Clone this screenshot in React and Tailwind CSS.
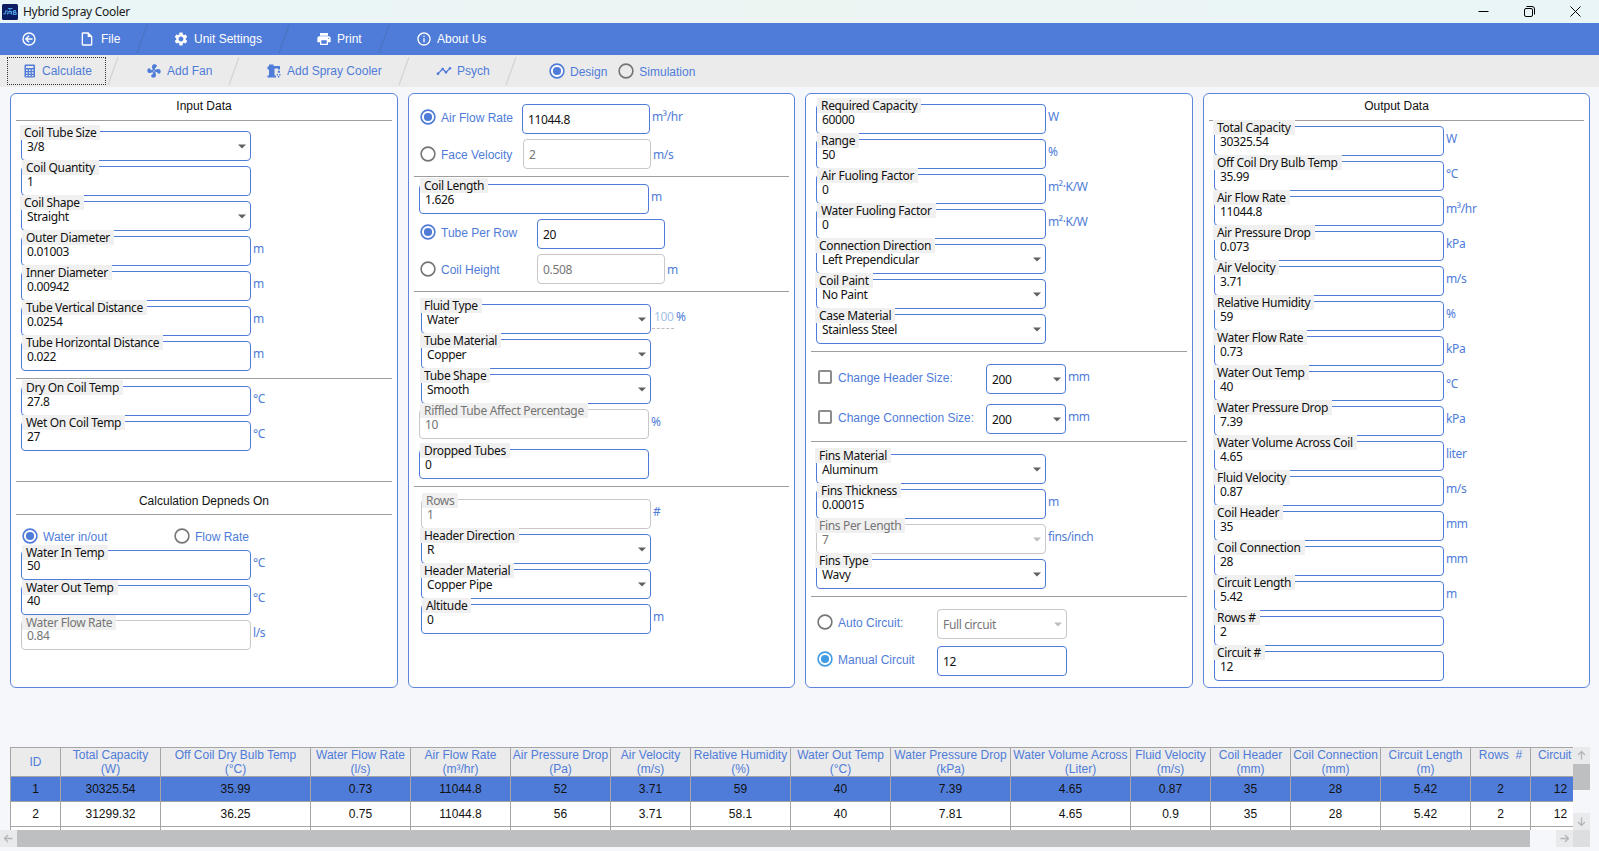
import React from "react";
import { MdOutlineInsertDriveFile, MdSettings, MdPrint, MdInfoOutline, MdTimeline } from "react-icons/md";

const outputs = [
  ["Total Capacity", "30325.54", "W"],
  ["Off Coil Dry Bulb Temp", "35.99", "°C"],
  ["Air Flow Rate", "11044.8", "m³/hr"],
  ["Air Pressure Drop", "0.073", "kPa"],
  ["Air Velocity", "3.71", "m/s"],
  ["Relative Humidity", "59", "%"],
  ["Water Flow Rate", "0.73", "kPa"],
  ["Water Out Temp", "40", "°C"],
  ["Water Pressure Drop", "7.39", "kPa"],
  ["Water Volume Across Coil", "4.65", "liter"],
  ["Fluid Velocity", "0.87", "m/s"],
  ["Coil Header", "35", "mm"],
  ["Coil Connection", "28", "mm"],
  ["Circuit Length", "5.42", "m"],
  ["Rows #", "2", ""],
  ["Circuit #", "12", ""],
];

const columns = [
  { w: 50, title: "ID", unit: "", rows: ["1", "2"] },
  { w: 100, title: "Total Capacity", unit: "(W)", rows: ["30325.54", "31299.32"] },
  { w: 150, title: "Off Coil Dry Bulb Temp", unit: "(°C)", rows: ["35.99", "36.25"] },
  { w: 100, title: "Water Flow Rate", unit: "(l/s)", rows: ["0.73", "0.75"] },
  { w: 100, title: "Air Flow Rate", unit: "(m³/hr)", rows: ["11044.8", "11044.8"] },
  { w: 100, title: "Air Pressure Drop", unit: "(Pa)", rows: ["52", "56"] },
  { w: 80, title: "Air Velocity", unit: "(m/s)", rows: ["3.71", "3.71"] },
  { w: 100, title: "Relative Humidity", unit: "(%)", rows: ["59", "58.1"] },
  { w: 100, title: "Water Out Temp", unit: "(°C)", rows: ["40", "40"] },
  { w: 120, title: "Water Pressure Drop", unit: "(kPa)", rows: ["7.39", "7.81"] },
  { w: 120, title: "Water Volume Across", unit: "(Liter)", unitClass: "pl-[20px]", rows: ["4.65", "4.65"] },
  { w: 80, title: "Fluid Velocity", unit: "(m/s)", rows: ["0.87", "0.9"] },
  { w: 80, title: "Coil Header", unit: "(mm)", rows: ["35", "35"] },
  { w: 90, title: "Coil Connection", unit: "(mm)", rows: ["28", "28"] },
  { w: 90, title: "Circuit Length", unit: "(m)", rows: ["5.42", "5.42"] },
  { w: 60, title: "Rows  #", unit: " ", rows: ["2", "2"] },
  { w: 60, title: "Circuit", unit: " ", titleClass: "self-start pl-[7px] tracking-[-0.1px]", rows: ["12", "12"] },
];

const Arrow = ({ disabled }) => (
  <svg
    className={`absolute right-[4px] top-[12px] ${disabled ? "text-[#bdbdbd]" : "text-[#616161]"}`}
    width="8"
    height="5"
    viewBox="0 0 8 5"
  >
    <path d="M0 0.5h8L4 4.5z" fill="currentColor" />
  </svg>
);

const Unit = ({ children, className = "pt-[5px]" }) => (
  <span
    className={`whitespace-nowrap font-['Noto_Sans',sans-serif] text-[12px] leading-[16px] tracking-[-0.35px] text-[#4f7cd8] ${className}`}
  >
    {children}
  </span>
);

// Outlined box, with or without a caption over its top border
const Box = ({
  label,
  value,
  combo,
  disabled,
  width = "w-[230px]",
  labelLeft = "left-0",
  labelTop = "-top-[7px]",
}) => (
  <div
    className={`relative h-[30px] shrink-0 rounded-[4px] border bg-white pl-[5px] pt-[7px] font-['Noto_Sans',sans-serif] text-[12px] leading-[16px] ${width} ${
      disabled ? "border-[#c8c8c8] text-[#757575]" : "border-[#4f7cd8] text-[#111]"
    }`}
  >
    <span className="block tracking-[-0.35px]">{value}</span>
    {label && (
      <span
        className={`absolute whitespace-nowrap bg-[#f0f0f0] px-[4px] leading-[15px] tracking-[-0.33px] ${labelTop} ${
          combo ? "-left-[2px]" : labelLeft
        }`}
      >
        {label}
      </span>
    )}
    {combo && <Arrow disabled={disabled} />}
  </div>
);

const Field = ({ unit, unitClass, className = "", ...box }) => (
  <div className={`flex gap-[2px] ${className}`}>
    <Box {...box} />
    {unit && <Unit className={unitClass}>{unit}</Unit>}
  </div>
);

const Radio = ({ checked, color = "#4f7cd8" }) => (
  <svg width="16" height="16" viewBox="0 0 16 16" className="shrink-0">
    <circle cx="8" cy="8" r="6.9" fill="#fff" fillOpacity={checked ? 1 : 0} stroke={checked ? color : "#757575"} strokeWidth="1.6" />
    {checked && <circle cx="8" cy="8" r="4.1" fill={color} />}
  </svg>
);

const Option = ({ label, checked, color, className = "" }) => (
  <div className={`flex items-center gap-[5px] ${className}`}>
    <Radio checked={checked} color={color} />
    <span className="whitespace-nowrap pt-[2px] text-[12px] leading-[14px] text-[#4f7cd8]">{label}</span>
  </div>
);

const CheckOption = ({ label }) => (
  <div className="flex h-[26px] w-[168px] items-center gap-[6px]">
    <span className="h-[14px] w-[14px] rounded-[2px] border-2 border-[#8c8c8c]" />
    <span className="whitespace-nowrap pt-[2px] text-[12px] leading-[14px] text-[#4f7cd8]">{label}</span>
  </div>
);

const Rule = ({ className = "" }) => <div className={`mx-[5px] h-px shrink-0 bg-[#9e9e9e] ${className}`} />;

const Panel = ({ className = "", children }) => (
  <section className={`flex h-[595px] flex-col rounded-[6px] border border-[#5c86db] bg-white ${className}`}>
    {children}
  </section>
);

const Slash = ({ className = "" }) => (
  <svg width="12" height="28" viewBox="0 0 12 28" className={`shrink-0 ${className}`}>
    <path d="M11 0L1 28" stroke="currentColor" strokeWidth="1.2" />
  </svg>
);

const BackIcon = ({ className = "" }) => (
  <svg width="16" height="16" viewBox="0 0 16 16" fill="none" stroke="currentColor" strokeWidth="1.4" className={className}>
    <circle cx="8" cy="8" r="6" />
    <path d="M11.500 8H5M8 4.800L4.800 8L8 11.200" />
  </svg>
);

const CalculatorIcon = () => (
  <svg width="12" height="14" viewBox="0 0 12 14" className="shrink-0">
    <rect x="0.500" y="0.500" width="10.500" height="13" rx="1.300" fill="#4f7cd8" />
    <path
      d="M2 2h7.500v2H2zM2 5.500h1.700v1.500H2zM4.900 5.500h1.700v1.500H4.900zM7.800 5.500h1.700v1.500H7.800zM2 8.200h1.700v1.500H2zM4.900 8.200h1.700v1.500H4.900zM7.800 8.200h1.700v1.500H7.800zM2 10.900h1.700v1.400H2zM4.900 10.900h1.700v1.400H4.900zM7.800 10.900h1.700v1.400H7.800z"
      fill="#ebebeb"
    />
  </svg>
);

const FanIcon = () => (
  <svg width="16" height="16" viewBox="0 0 24 24" fill="currentColor" className="shrink-0">
    <path d="M12,11A1,1 0 0,0 11,12A1,1 0 0,0 12,13A1,1 0 0,0 13,12A1,1 0 0,0 12,11M12.5,2C17,2 17.11,5.57 14.75,6.75C13.76,7.24 13.32,8.29 13.13,9.22C13.61,9.42 14.03,9.73 14.35,10.13C18.05,8.13 22.03,8.92 22.03,12.5C22.03,17 18.46,17.1 17.28,14.73C16.78,13.74 15.72,13.3 14.79,13.11C14.59,13.59 14.28,14 13.88,14.34C15.87,18.03 15.08,22 11.5,22C7,22 6.91,18.42 9.27,17.24C10.25,16.75 10.69,15.71 10.89,14.79C10.4,14.59 9.97,14.27 9.65,13.87C5.96,15.85 2,15.07 2,11.5C2,7 5.56,6.89 6.74,9.26C7.24,10.25 8.29,10.68 9.22,10.87C9.41,10.39 9.73,9.97 10.14,9.65C8.15,5.96 8.94,2 12.5,2Z" />
  </svg>
);

const SprayIcon = () => (
  <svg width="14" height="14" viewBox="0 0 14 14" className="shrink-0" fill="#4f7cd8">
    <path d="M2 0.500h4.500V2H13v3.500h-2V4.500H7.500V11.500H9V13.500H0.500V11.500H2V5.500H0.500V2.500H2z" />
    <path d="M10.800 6.700h2.200v2h-2.200zM9.800 10h1.300v1.500H9.800zM12.200 10h1.300v1.500h-1.300zM10.800 12h1.500v1.500h-1.500z" />
  </svg>
);

const ScrollArrow = ({ d }) => (
  <div className="flex h-[17px] w-[17px] shrink-0 items-center justify-center bg-[#e9eaeb]">
    <svg width="9" height="9" viewBox="0 0 9 9" fill="none" stroke="#b4b5b7" strokeWidth="1.3">
      <path d={d} />
    </svg>
  </div>
);

const TitleBar = () => (
  <header className="flex h-[23px] items-center bg-gradient-to-r from-[#e9f5f7] via-[#edf5f3] to-[#e9f5f7] pl-[2px]">
    <svg width="16" height="16" viewBox="0 0 16 16">
      <rect width="16" height="16" rx="1.500" fill="#0b1c63" />
      <path
        d="M6 4.500h4.500M8 4.500v2M1.500 9.500c1.500 1 2 0 2.300-2.500h2.200M5.500 10.500v-2M6 7.500h3.500v3M6 9h3M11.500 6.500v4h2.500v-2h-2.500M11.500 6.500h1.800v1.500"
        stroke="#4a9be0"
        strokeWidth="1.200"
        fill="none"
      />
    </svg>
    <h1 className="ml-[5px] font-['Noto_Sans',sans-serif] text-[12px] leading-[16px] tracking-[-0.3px] text-[#1a1a1a]">
      Hybrid Spray Cooler
    </h1>
    <div className="ml-auto flex items-center gap-[35px] pb-[2px] pr-[18px] text-black">
      <svg width="11" height="12" viewBox="0 0 11 12" fill="none" stroke="currentColor">
        <path d="M0.500 6.500h10" />
      </svg>
      <svg width="11" height="12" viewBox="0 0 11 12" fill="none" stroke="currentColor">
        <rect x="0.500" y="3.500" width="8" height="8" rx="1.500" />
        <path d="M2.500 1.500h5.500a2.500 2.500 0 0 1 2.500 2.500v5.500" />
      </svg>
      <svg width="11" height="12" viewBox="0 0 11 12" fill="none" stroke="currentColor">
        <path d="M0.500 1.500l10 10M10.500 1.500l-10 10" />
      </svg>
    </div>
  </header>
);

const MenuBar = () => (
  <nav className="flex h-[32px] items-center bg-[#4f7cd8] text-[12px] text-white">
    <BackIcon className="ml-[21px]" />
    <div className="ml-[42px] flex w-[57px] items-center gap-[6px]">
      <MdOutlineInsertDriveFile size={16} />
      <span>File</span>
    </div>
    <Slash className="text-[#4a74bf]" />
    <div className="ml-[25px] flex w-[105px] items-center gap-[5px]">
      <MdSettings size={16} />
      <span className="whitespace-nowrap">Unit Settings</span>
    </div>
    <Slash className="text-[#4a74bf]" />
    <div className="ml-[26px] flex w-[62px] items-center gap-[5px]">
      <MdPrint size={16} />
      <span>Print</span>
    </div>
    <Slash className="text-[#4a74bf]" />
    <div className="ml-[26px] flex items-center gap-[5px]">
      <MdInfoOutline size={16} />
      <span>About Us</span>
    </div>
  </nav>
);

const ToolBar = () => (
  <div className="flex h-[32px] items-center bg-[#ebebeb] pl-[7px] text-[12px] text-[#4f7cd8]">
    <button className="flex h-[28px] w-[99px] items-center gap-[6px] border border-dotted border-[#333] pl-[16px]">
      <CalculatorIcon />
      <span>Calculate</span>
    </button>
    <Slash className="ml-[1px] text-[#d3d3d3]" />
    <div className="ml-[27px] flex w-[82px] items-center gap-[5px]">
      <FanIcon />
      <span>Add Fan</span>
    </div>
    <Slash className="text-[#d3d3d3]" />
    <div className="ml-[27px] flex w-[131px] items-center gap-[6px]">
      <SprayIcon />
      <span className="whitespace-nowrap">Add Spray Cooler</span>
    </div>
    <Slash className="text-[#d3d3d3]" />
    <div className="ml-[26px] flex w-[69px] items-center gap-[5px]">
      <MdTimeline size={16} />
      <span>Psych</span>
    </div>
    <Slash className="text-[#d3d3d3]" />
    <Option label="Design" checked className="ml-[32px]" />
    <Option label="Simulation" className="ml-[11px]" />
  </div>
);

const InputPanel = () => (
  <Panel className="w-[388px]">
    <h2 className="h-[26px] pt-[4px] text-center text-[12px] leading-[16px]">Input Data</h2>
    <Rule />
    <div className="ml-[10px] mt-[10px] flex flex-col gap-[5px]">
      <Field label="Coil Tube Size" value="3/8" combo />
      <Field label="Coil Quantity" value="1" />
      <Field label="Coil Shape" value="Straight" combo />
      <Field label="Outer Diameter" value="0.01003" unit="m" />
      <Field label="Inner Diameter" value="0.00942" unit="m" />
      <Field label="Tube Vertical Distance" value="0.0254" unit="m" />
      <Field label="Tube Horizontal Distance" value="0.022" unit="m" />
    </div>
    <Rule className="mt-[7px]" />
    <div className="ml-[10px] mt-[7px] flex flex-col gap-[5px]">
      <Field label="Dry On Coil Temp" value="27.8" unit="°C" />
      <Field label="Wet On Coil Temp" value="27" unit="°C" />
    </div>
    <Rule className="mt-[30px]" />
    <h2 className="h-[32px] pt-[11px] text-center text-[12px] leading-[16px]">Calculation Depneds On</h2>
    <Rule />
    <div className="ml-[11px] flex h-[35px] pt-[13px]">
      <Option label="Water in/out" checked className="h-[16px] w-[152px]" />
      <Option label="Flow Rate" className="h-[16px]" />
    </div>
    <div className="ml-[10px] flex flex-col gap-[5px]">
      <Field label="Water In Temp" value="50" unit="°C" labelTop="-top-[6px]" />
      <Field label="Water Out Temp" value="40" unit="°C" labelTop="-top-[6px]" />
      <Field label="Water Flow Rate" value="0.84" unit="l/s" labelTop="-top-[6px]" disabled />
    </div>
  </Panel>
);

const CoilPanel = () => (
  <Panel className="w-[387px]">
    <div className="ml-[11px] mt-[10px] flex flex-col gap-[5px]">
      <div className="flex">
        <Option label="Air Flow Rate" checked className="h-[26px] w-[102px]" />
        <Field value="11044.8" width="w-[128px]" unit="m³/hr" />
      </div>
      <div className="flex">
        <Option label="Face Velocity" className="h-[30px] w-[103px]" />
        <Field value="2" width="w-[128px]" unit="m/s" unitClass="pt-[8px]" disabled />
      </div>
    </div>
    <Rule className="mt-[7px]" />
    <Field label="Coil Length" value="1.626" unit="m" className="ml-[10px] mt-[7px]" />
    <div className="ml-[11px] mt-[5px] flex flex-col gap-[5px]">
      <div className="flex">
        <Option label="Tube Per Row" checked className="h-[26px] w-[117px]" />
        <Field value="20" width="w-[128px]" />
      </div>
      <div className="flex">
        <Option label="Coil Height" className="h-[30px] w-[117px]" />
        <Field value="0.508" width="w-[128px]" unit="m" unitClass="pt-[8px]" disabled />
      </div>
    </div>
    <Rule className="mt-[7px]" />
    <div className="ml-[12px] mt-[12px] flex flex-col gap-[5px]">
      <div className="flex">
        <Box label="Fluid Type" value="Water" combo />
        <Unit className="ml-[1px] h-[25px] w-[22px] border-b border-dashed border-[#bdbdbd] pl-[2px] pt-[5px] !text-[#a6bfe6]">
          100
        </Unit>
        <Unit className="ml-[2px] pt-[5px]">%</Unit>
      </div>
      <Field label="Tube Material" value="Copper" combo />
      <Field label="Tube Shape" value="Smooth" combo />
    </div>
    <div className="ml-[10px] mt-[5px] flex flex-col gap-[10px]">
      <Field label="Riffled Tube Affect Percentage" value="10" unit="%" disabled />
      <Field label="Dropped Tubes" value="0" />
    </div>
    <Rule className="mt-[7px]" />
    <div className="ml-[12px] mt-[12px] flex flex-col gap-[5px]">
      <Field label="Rows" value="1" unit="#" disabled />
      <Field label="Header Direction" value="R" combo />
      <Field label="Header Material" value="Copper Pipe" combo />
      <Field label="Altitude" value="0" unit="m" />
    </div>
  </Panel>
);

const FinsPanel = () => (
  <Panel className="w-[388px]">
    <div className="ml-[10px] mt-[10px] flex flex-col gap-[5px]">
      <Field label="Required Capacity" value="60000" unit="W" />
      <Field label="Range" value="50" unit="%" />
      <Field label="Air Fuoling Factor" value="0" unit="m²·K/W" />
      <Field label="Water Fuoling Factor" value="0" unit="m²·K/W" />
      <Field label="Connection Direction" value="Left Prependicular" combo />
      <Field label="Coil Paint" value="No Paint" combo />
      <Field label="Case Material" value="Stainless Steel" combo />
    </div>
    <Rule className="mt-[7px]" />
    <div className="ml-[12px] mt-[12px] flex flex-col gap-[10px]">
      <div className="flex">
        <CheckOption label="Change Header Size:" />
        <Field value="200" combo width="w-[80px]" unit="mm" />
      </div>
      <div className="flex">
        <CheckOption label="Change Connection Size:" />
        <Field value="200" combo width="w-[80px]" unit="mm" />
      </div>
    </div>
    <Rule className="mt-[7px]" />
    <div className="ml-[10px] mt-[12px] flex flex-col gap-[5px]">
      <Field label="Fins Material" value="Aluminum" combo />
      <Field label="Fins Thickness" value="0.00015" unit="m" />
      <Field label="Fins Per Length" value="7" unit="fins/inch" combo disabled />
      <Field label="Fins Type" value="Wavy" combo />
    </div>
    <Rule className="mt-[7px]" />
    <div className="ml-[11px] mt-[12px] flex flex-col gap-[7px]">
      <div className="flex">
        <Option label="Auto Circuit:" className="h-[26px] w-[120px]" />
        <Field value="Full circuit" combo width="w-[130px]" disabled />
      </div>
      <div className="flex">
        <Option label="Manual Circuit" checked color="#429ce3" className="h-[26px] w-[120px]" />
        <Field value="12" width="w-[130px]" />
      </div>
    </div>
  </Panel>
);

const OutputPanel = () => (
  <Panel className="w-[387px]">
    <h2 className="h-[26px] pt-[4px] text-center text-[12px] leading-[16px]">Output Data</h2>
    <Rule />
    <div className="ml-[10px] mt-[5px] flex flex-col gap-[5px]">
      {outputs.map(([label, value, unit]) => (
        <Field key={label} label={label} value={value} unit={unit} labelLeft="-left-[2px]" />
      ))}
    </div>
  </Panel>
);

const ResultsTable = () => (
  <div className="mt-[59px]">
    <div className="ml-[10px] flex h-[83px]">
      <div className="flex w-[1563px] overflow-hidden border-l border-t border-[#a5a5a5] text-[12px]">
        {columns.map((col) => (
          <div key={col.title} className="shrink-0" style={{ width: col.w }}>
            <div className="flex h-[29px] flex-col items-center justify-center border-b border-r border-[#a5a5a5] bg-[#ebebeb] leading-[14px] text-[#4f7cd8]">
              <span className={`whitespace-pre ${col.titleClass || ""}`}>{col.title}</span>
              {col.unit && <span className={`h-[14px] ${col.unitClass || ""}`}>{col.unit}</span>}
            </div>
            {col.rows.map((cell, i) => (
              <div
                key={i}
                className={`flex h-[25px] items-center justify-center border-b border-r border-[#a5a5a5] text-[#111] ${
                  i === 0 ? "bg-[#4f7cd8]" : "bg-white"
                }`}
              >
                {cell}
              </div>
            ))}
            <div className="h-[3px] border-r border-[#a5a5a5] bg-white" />
          </div>
        ))}
      </div>
      <div className="flex w-[17px] flex-col">
        <ScrollArrow d="M4.500 8.500v-8M1 4l3.500-3.500L8 4" />
        <div className="h-[26px] bg-[#bebfc1]" />
        <div className="mt-auto">
          <ScrollArrow d="M4.500 0.500v8M1 5l3.500 3.500L8 5" />
        </div>
      </div>
    </div>
    <div className="flex h-[17px] w-[1590px]">
      <ScrollArrow d="M8.500 4.500h-8M4 1L0.500 4.500L4 8" />
      <div className="w-[1513px] bg-[#bebfc1]" />
      <div className="ml-auto">
        <ScrollArrow d="M0.500 4.500h8M5 1l3.500 3.500L5 8" />
      </div>
      <div className="w-[17px] bg-[#dddedf]" />
    </div>
  </div>
);

const App = () => {
  return (
    <div className="h-[851px] w-[1599px] overflow-hidden bg-[#f5f7fb] font-['Liberation_Sans',Arial,sans-serif] text-[#111]">
      <TitleBar />
      <MenuBar />
      <ToolBar />
      <main className="ml-[10px] mt-[6px] flex gap-[10px]">
        <InputPanel />
        <CoilPanel />
        <FinsPanel />
        <OutputPanel />
      </main>
      <ResultsTable />
    </div>
  );
};

export default App;
